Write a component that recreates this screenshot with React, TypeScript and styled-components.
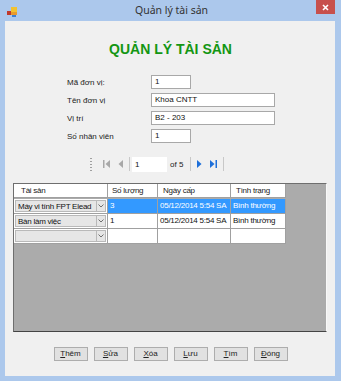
import React from "react"
import styled, {createGlobalStyle} from "styled-components"

const GlobalStyle = createGlobalStyle`
  html, body {
    margin: 0;
    padding: 0;
    background: #acc8ec;
  }
  * {
    box-sizing: border-box;
  }
`

const Window = styled.div`
  width: 341px;
  height: 381px;
  background: #acc8ec;
  display: flex;
  flex-direction: column;
  font-family: "Liberation Sans", Arial, sans-serif;
`

const TitleBar = styled.div`
  height: 21px;
  display: flex;
  align-items: flex-start;
`

const AppIcon = styled.svg`
  margin: 7px 0 0 7px;
  flex: none;
`

const TitleText = styled.div`
  flex: 1;
  text-align: center;
  font-family: "Noto Sans", "Open Sans", sans-serif;
  font-size: 10.5px;
  line-height: 21px;
  color: #333;
  padding-left: 10px;
`

const CloseButton = styled.div`
  width: 19px;
  height: 14px;
  margin-right: 6px;
  background: #c7504c;
  display: flex;
  align-items: center;
  justify-content: center;
`

const Client = styled.div`
  flex: 1;
  margin: 0 6px 5px 5px;
  background: #f0f0f0;
  display: flex;
  flex-direction: column;
  align-items: stretch;
`

const Heading = styled.h1`
  margin: 19px 0 0;
  text-align: center;
  font-size: 14px;
  line-height: 18px;
  font-weight: bold;
  color: #139613;
  padding-left: 1px;
`

const Form = styled.div`
  margin: 17px 0 0 62px;
  display: flex;
  flex-direction: column;
  gap: 4px;
`

const FormRow = styled.div`
  display: grid;
  grid-template-columns: 84px auto;
  align-items: center;
  height: 14px;
`

const Label = styled.span`
  font-size: 8px;
  color: #222;
`

const TextInput = styled.div<{w: number}>`
  width: ${(p) => p.w}px;
  height: 14px;
  background: #fff;
  border: 1px solid #a8a8a8;
  font-size: 8px;
  line-height: 12px;
  padding-left: 3px;
  color: #111;
`

const Navigator = styled.div`
  margin: 13px 0 0 85px;
  height: 16px;
  display: flex;
  align-items: center;
`

const Grip = styled.div`
  width: 2px;
  height: 13px;
  margin-right: 7px;
  background: repeating-linear-gradient(
    to bottom,
    #a0a0a0 0 1px,
    transparent 1px 3px
  );
`

const NavButton = styled.svg`
  flex: none;
  margin: 0 4px;
`

const Separator = styled.div`
  width: 1px;
  height: 14px;
  background: #c8c8c8;
  margin: 0 2px;
`

const PageBox = styled.div`
  width: 35px;
  height: 15px;
  background: #fff;
  font-size: 8px;
  line-height: 15px;
  padding-left: 3px;
  color: #111;
`

const PageCount = styled.span`
  font-size: 8px;
  color: #222;
  margin: 0 5px 0 3px;
`

const Grid = styled.div`
  margin: 11px 8px 0 8px;
  height: 149px;
  background: #ababab;
  border: 1px solid;
  border-color: #6e6e6e #f8f8f8 #444 #6e6e6e;
`

const GridTable = styled.div`
  display: grid;
  grid-template-columns: 94px 50px 73px 55px;
  grid-auto-rows: 15px;
  width: max-content;
  letter-spacing: -0.25px;
`

const HeaderCell = styled.div<{pad?: number}>`
  height: 14px;
  background: #fff;
  border-right: 1px solid #a0a0a0;
  border-bottom: 1px solid #a0a0a0;
  font-size: 8px;
  line-height: 13px;
  color: #222;
  padding-left: ${(p) => p.pad ?? 6}px;
`

const Cell = styled.div<{selected?: boolean}>`
  background: ${(p) => (p.selected ? "#3399ff" : "#fff")};
  color: ${(p) => (p.selected ? "#fff" : "#111")};
  border-right: 1px solid #a0a0a0;
  border-bottom: 1px solid #a0a0a0;
  font-size: 8px;
  line-height: 14px;
  padding-left: 2px;
  white-space: nowrap;
  overflow: hidden;
`

const ComboCell = styled.div`
  display: flex;
  border-right: 1px solid #a0a0a0;
  border-bottom: 1px solid #a0a0a0;
  background: #fff;
  padding: 1px;
`

const ComboText = styled.div`
  flex: 1;
  background: #e6e6e6;
  border: 1px solid #b9b9b9;
  border-right: none;
  font-size: 8px;
  line-height: 11px;
  padding-left: 2px;
  color: #111;
  white-space: nowrap;
  overflow: hidden;
`

const ComboArrow = styled.div`
  width: 10px;
  background: #e6e6e6;
  border: 1px solid #b9b9b9;
  display: flex;
  align-items: center;
  justify-content: center;
`

const ButtonBar = styled.div`
  margin-top: 15px;
  display: flex;
  justify-content: center;
  gap: 6px;
  padding-left: 1px;
`

const Button = styled.div`
  width: 34px;
  height: 14px;
  background: #e1e1e1;
  border: 1px solid #adadad;
  font-size: 8px;
  line-height: 12px;
  text-align: center;
  color: #222;
  u {
    text-decoration: underline;
  }
`

const Chevron = () => (
  <svg width="6" height="4" viewBox="0 0 6 4">
    <path d="M0.5 0.5 L3 3 L5.5 0.5" stroke="#707070" fill="none" strokeWidth="1" />
  </svg>
)

const rows = [
  {asset: "Máy vi tính FPT Elead", qty: "3", date: "05/12/2014 5:54 SA", status: "Bình thường", selected: true},
  {asset: "Bàn làm việc", qty: "1", date: "05/12/2014 5:54 SA", status: "Bình thường", selected: false},
  {asset: "", qty: "", date: "", status: "", selected: false},
]

const buttons: [string, string][] = [
  ["T", "hêm"],
  ["S", "ửa"],
  ["X", "óa"],
  ["L", "ưu"],
  ["T", "ìm"],
  ["Đ", "óng"],
]

export default function App() {
  return (
    <Window>
      <GlobalStyle />
      <TitleBar>
        <AppIcon width="10" height="10" viewBox="0 0 10 10">
          <rect x="0" y="4" width="4" height="4" fill="#c0392b" />
          <rect x="4" y="0" width="6" height="5" fill="#f2c230" />
          <rect x="4" y="5" width="6" height="3" fill="#e89a2c" />
          <rect x="5" y="8" width="4" height="2" fill="#3f7fd0" />
        </AppIcon>
        <TitleText>Quản lý tài sản</TitleText>
        <CloseButton>
          <svg width="7" height="7" viewBox="0 0 7 7">
            <path d="M1 1 L6 6 M6 1 L1 6" stroke="#fff" strokeWidth="1.6" />
          </svg>
        </CloseButton>
      </TitleBar>
      <Client>
        <Heading>QUẢN LÝ TÀI SẢN</Heading>
        <Form>
          <FormRow>
            <Label>Mã đơn vị:</Label>
            <TextInput w={40}>1</TextInput>
          </FormRow>
          <FormRow>
            <Label>Tên đơn vị</Label>
            <TextInput w={124}>Khoa CNTT</TextInput>
          </FormRow>
          <FormRow>
            <Label>Vị trí</Label>
            <TextInput w={124}>B2 - 203</TextInput>
          </FormRow>
          <FormRow>
            <Label>Số nhân viên</Label>
            <TextInput w={40}>1</TextInput>
          </FormRow>
        </Form>
        <Navigator>
          <Grip />
          <NavButton width="7" height="8" viewBox="0 0 7 8">
            <rect x="0" y="0" width="1.5" height="8" fill="#a8a8a8" />
            <path d="M7 0 L2.5 4 L7 8 Z" fill="#a8a8a8" />
          </NavButton>
          <NavButton width="5" height="8" viewBox="0 0 5 8">
            <path d="M5 0 L0.5 4 L5 8 Z" fill="#a8a8a8" />
          </NavButton>
          <Separator />
          <PageBox>1</PageBox>
          <PageCount>of 5</PageCount>
          <Separator />
          <NavButton width="5" height="8" viewBox="0 0 5 8">
            <path d="M0 0 L4.5 4 L0 8 Z" fill="#1e6fd9" />
          </NavButton>
          <NavButton width="7" height="8" viewBox="0 0 7 8">
            <path d="M0 0 L4.5 4 L0 8 Z" fill="#1e6fd9" />
            <rect x="5.5" y="0" width="1.5" height="8" fill="#1e6fd9" />
          </NavButton>
          <Separator />
        </Navigator>
        <Grid>
          <GridTable>
            <HeaderCell pad={7}>Tài sản</HeaderCell>
            <HeaderCell pad={4}>Số lượng</HeaderCell>
            <HeaderCell pad={5}>Ngày cấp</HeaderCell>
            <HeaderCell pad={5}>Tình trạng</HeaderCell>
            {rows.map((r, i) => (
              <React.Fragment key={i}>
                <ComboCell>
                  <ComboText>{r.asset}</ComboText>
                  <ComboArrow>
                    <Chevron />
                  </ComboArrow>
                </ComboCell>
                <Cell selected={r.selected}>{r.qty}</Cell>
                <Cell selected={r.selected}>{r.date}</Cell>
                <Cell selected={r.selected}>{r.status}</Cell>
              </React.Fragment>
            ))}
          </GridTable>
        </Grid>
        <ButtonBar>
          {buttons.map(([k, rest], i) => (
            <Button key={i}>
              <u>{k}</u>
              {rest}
            </Button>
          ))}
        </ButtonBar>
      </Client>
    </Window>
  )
}
